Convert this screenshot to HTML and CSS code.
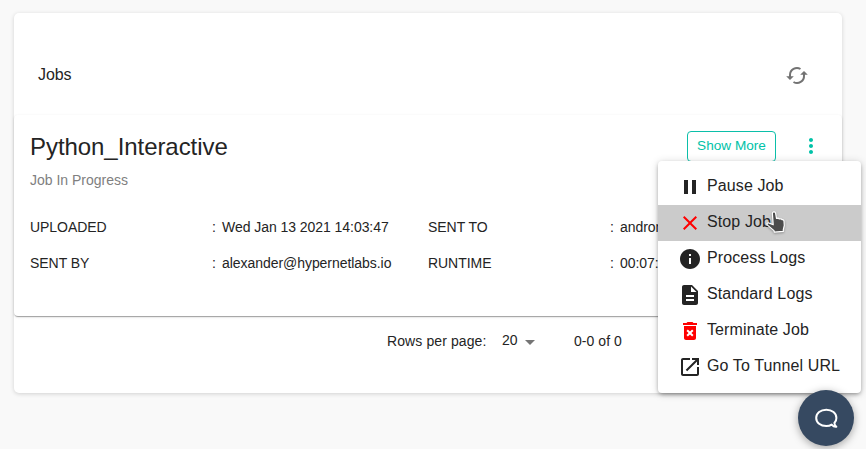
FILE: index.html
```html
<!DOCTYPE html>
<html lang="en">
<head>
<meta charset="utf-8">
<title>Jobs</title>
<link rel="stylesheet" href="styles.css">
</head>
<body>
<main class="panel">
  <header class="toolbar">
    <h1 class="toolbar-title">Jobs</h1>
    <svg class="refresh" viewBox="0 0 24 24" width="24" height="24"><path d="M5 14V12A7 7 0 0 1 15.500 6M8.500 19A7 7 0 0 0 19 12.500V10.500" fill="none" stroke="currentColor" stroke-width="2"/><path d="M1.200 13.200h7.600L5 17zM15.200 11.800h7.600L19 8z" fill="currentColor"/></svg>
  </header>
  <section class="job">
    <div class="job-head">
      <div>
        <h2 class="job-name">Python_Interactive</h2>
        <p class="job-status">Job In Progress</p>
      </div>
      <div class="job-actions">
        <button class="show-more">Show More</button>
        <svg class="dots" viewBox="0 0 24 24" width="24" height="24"><path fill="currentColor" d="M12 8c1.1 0 2-.9 2-2s-.9-2-2-2-2 .9-2 2 .9 2 2 2zm0 2c-1.1 0-2 .9-2 2s.9 2 2 2 2-.9 2-2-.9-2-2-2zm0 6c-1.1 0-2 .9-2 2s.9 2 2 2 2-.9 2-2-.9-2-2-2z"/></svg>
      </div>
    </div>
    <dl class="details">
      <dt>UPLOADED</dt><dd><i>:</i><span class="date">Wed Jan 13 2021 14:03:47</span></dd>
      <dt>SENT TO</dt><dd><i>:</i><span>andromeda</span></dd>
      <dt>SENT BY</dt><dd><i>:</i><span class="mail">alexander@hypernetlabs.io</span></dd>
      <dt>RUNTIME</dt><dd><i>:</i><span>00:07:12</span></dd>
    </dl>
  </section>
  <footer class="pager">
    <span class="pager-label">Rows per page:</span>
    <span class="pager-size">20</span>
    <svg class="caret" viewBox="0 0 24 24" width="24" height="24"><path fill="currentColor" d="M7 10l5 5 5-5z"/></svg>
    <span class="pager-range">0-0 of 0</span>
  </footer>
</main>

<ul class="menu">
  <li><svg viewBox="0 0 24 24"><path d="M6 19h4V5H6v14zm8-14v14h4V5h-4z"/></svg><span>Pause Job</span></li>
  <li class="active"><svg class="red" viewBox="0 0 24 24"><path d="M19 6.41L17.59 5 12 10.59 6.41 5 5 6.41 10.59 12 5 17.59 6.41 19 12 13.41 17.59 19 19 17.59 13.41 12z"/></svg><span>Stop Job</span></li>
  <li><svg viewBox="0 0 24 24"><path d="M12 2C6.48 2 2 6.48 2 12s4.480 10 10 10 10-4.480 10-10S17.520 2 12 2zm1 15h-2v-6h2v6zm0-8h-2V7h2v2z"/></svg><span>Process Logs</span></li>
  <li><svg viewBox="0 0 24 24"><path d="M14 2H6c-1.100 0-1.990.9-1.990 2L4 20c0 1.100.89 2 1.990 2H18c1.100 0 2-.9 2-2V8l-6-6zm2 16H8v-2h8v2zm0-4H8v-2h8v2zm-3-5V3.500L18.500 9H13z"/></svg><span>Standard Logs</span></li>
  <li><svg class="red" viewBox="0 0 24 24"><path fill-rule="evenodd" d="M6 19c0 1.100.9 2 2 2h8c1.100 0 2-.9 2-2V7H6v12zM8.460 11.880l1.410-1.410L12 12.590l2.120-2.120 1.410 1.410L13.410 14l2.120 2.120-1.410 1.410L12 15.410l-2.120 2.120-1.410-1.410L10.590 14zM15.500 4l-1-1h-5l-1 1H5v2h14V4z"/></svg><span>Terminate Job</span></li>
  <li><svg viewBox="0 0 24 24"><path d="M19 19H5V5h7V3H5c-1.110 0-2 .9-2 2v14c0 1.100.89 2 2 2h14c1.100 0 2-.9 2-2v-7h-2v7zM14 3v2h3.590l-9.830 9.830 1.410 1.410L19 6.410V10h2V3h-7z"/></svg><span>Go To Tunnel URL</span></li>
</ul>

<svg class="pointer" viewBox="0 0 22 24" width="22" height="24"><path d="M7.400 3.800c-.2-2.200 2.800-2.600 3.200-.6l.9 5.100 1.400-.2 1.500.8 1.600-.1 1.200.9c1.100-.2 1.700.5 1.800 1.500l.3 4.300-1 4.200v1.700l-9 .7-.3-1.500-6.200-5.200c-1.800-1.500-.3-3.200 1.500-2.300l3.900 1.700z" fill="#4b4b4b" stroke="#fff" stroke-width="1.200" stroke-linejoin="round"/></svg>

<button class="chat" aria-label="Chat"><svg viewBox="0 0 24 24" width="24" height="24"><path d="M17.700 18.600C16.200 19.600 14.200 20.100 12.300 20.100 6.500 20.100 2.200 16.500 2.200 11.900s4.300-8.200 10.100-8.200 10.100 3.600 10.100 8.200c0 2-.7 3.700-2 5.100.1 1.700.7 2.900 2 3.800-1.800.3-3.300-.5-4.700-2.200z" fill="none" stroke="#fff" stroke-width="2" stroke-linejoin="round"/></svg></button>
</body>
</html>
```
FILE: styles.css
```css
* { box-sizing: border-box; }
body {
  margin: 0;
  height: 449px;
  padding: 13px 24px 0 14px;
  overflow: hidden;
  background: #f9f9f9;
  color: #242424;
  font-family: "Liberation Sans", Arial, sans-serif;
  font-size: 14px;
}
h1, h2, p, dl, dd, ul { margin: 0; padding: 0; font-weight: 400; }
.panel {
  height: 380px;
  background: #fff;
  border-radius: 5px;
  box-shadow: 0 1px 4px rgba(0, 0, 0, .16);
}
.toolbar {
  height: 102px;
  padding: 22px 33px 0 24px;
  display: flex;
  align-items: center;
  justify-content: space-between;
}
.toolbar-title { font-size: 16px; line-height: 24px; letter-spacing: -.1px; }
.refresh { color: #737373; }
.job {
  height: 201px;
  padding: 16px;
  background: #fff;
  border-radius: 4px;
  box-shadow: 0 2px 1px -1px rgba(0, 0, 0, .2), 0 1px 1px rgba(0, 0, 0, .14), 0 1px 3px rgba(0, 0, 0, .12);
}
.job-head { display: flex; justify-content: space-between; }
.job-name { font-size: 24px; line-height: 32px; letter-spacing: -.06px; }
.job-status { margin-top: 7px; line-height: 20px; color: #808080; letter-spacing: 0; }
.job-actions { display: flex; align-items: flex-start; gap: 23px; padding-right: 3px; }
.show-more {
  width: 89px;
  height: 31px;
  padding: 0 0 2px;
  border: 1px solid #0bbfa9;
  border-radius: 4px;
  background: #fff;
  color: #00c2a8;
  font: 13.6px "Liberation Sans", Arial, sans-serif;
  white-space: nowrap;
}
.dots { margin-top: 3px; color: #00c2a8; }
.details {
  display: grid;
  grid-template-columns: 182px 216px 182px 216px;
  grid-auto-rows: 36px;
  margin-top: 19px;
  line-height: 36px;
  letter-spacing: -.05px;
}
.details dd { display: flex; }
.details i { width: 10px; font-style: normal; }
.pager { display: flex; height: 48px; align-items: center; margin-top: 1px; padding-left: 373px; }
.pager-label { width: 115px; letter-spacing: .1px; }
.pager-size { width: 16px; padding-bottom: 2px; }
.caret { color: #757575; margin-top: 2px; }
.pager-range { margin-left: 32px; letter-spacing: .05px; }
.menu {
  position: absolute;
  left: 658px;
  top: 161px;
  width: 203px;
  height: 232px;
  padding: 8px 0;
  list-style: none;
  background: #fff;
  border-radius: 4px;
  box-shadow: 0 2px 4px -1px rgba(0, 0, 0, .4), 0 1px 8px rgba(0, 0, 0, .16);
}
.menu li {
  display: flex;
  height: 36px;
  padding-left: 20px;
  font-size: 16px;
  line-height: 33px;
  letter-spacing: .11px;
  white-space: nowrap;
}
.menu svg { width: 24px; height: 24px; margin: 6px 5px 0 0; fill: #242424; }
.menu .red { fill: #f00; }
.menu .active { background: #cbcbcb; }
.pointer { position: absolute; left: 765px; top: 210px; filter: drop-shadow(0 1px 1px rgba(0, 0, 0, .3)); }
.chat {
  position: absolute;
  left: 798px;
  top: 390px;
  width: 56px;
  height: 56px;
  padding: 0;
  display: grid;
  place-items: center;
  border: 0;
  border-radius: 50%;
  background: #364961;
  box-shadow: 0 2px 8px rgba(0, 0, 0, .35);
}
```
